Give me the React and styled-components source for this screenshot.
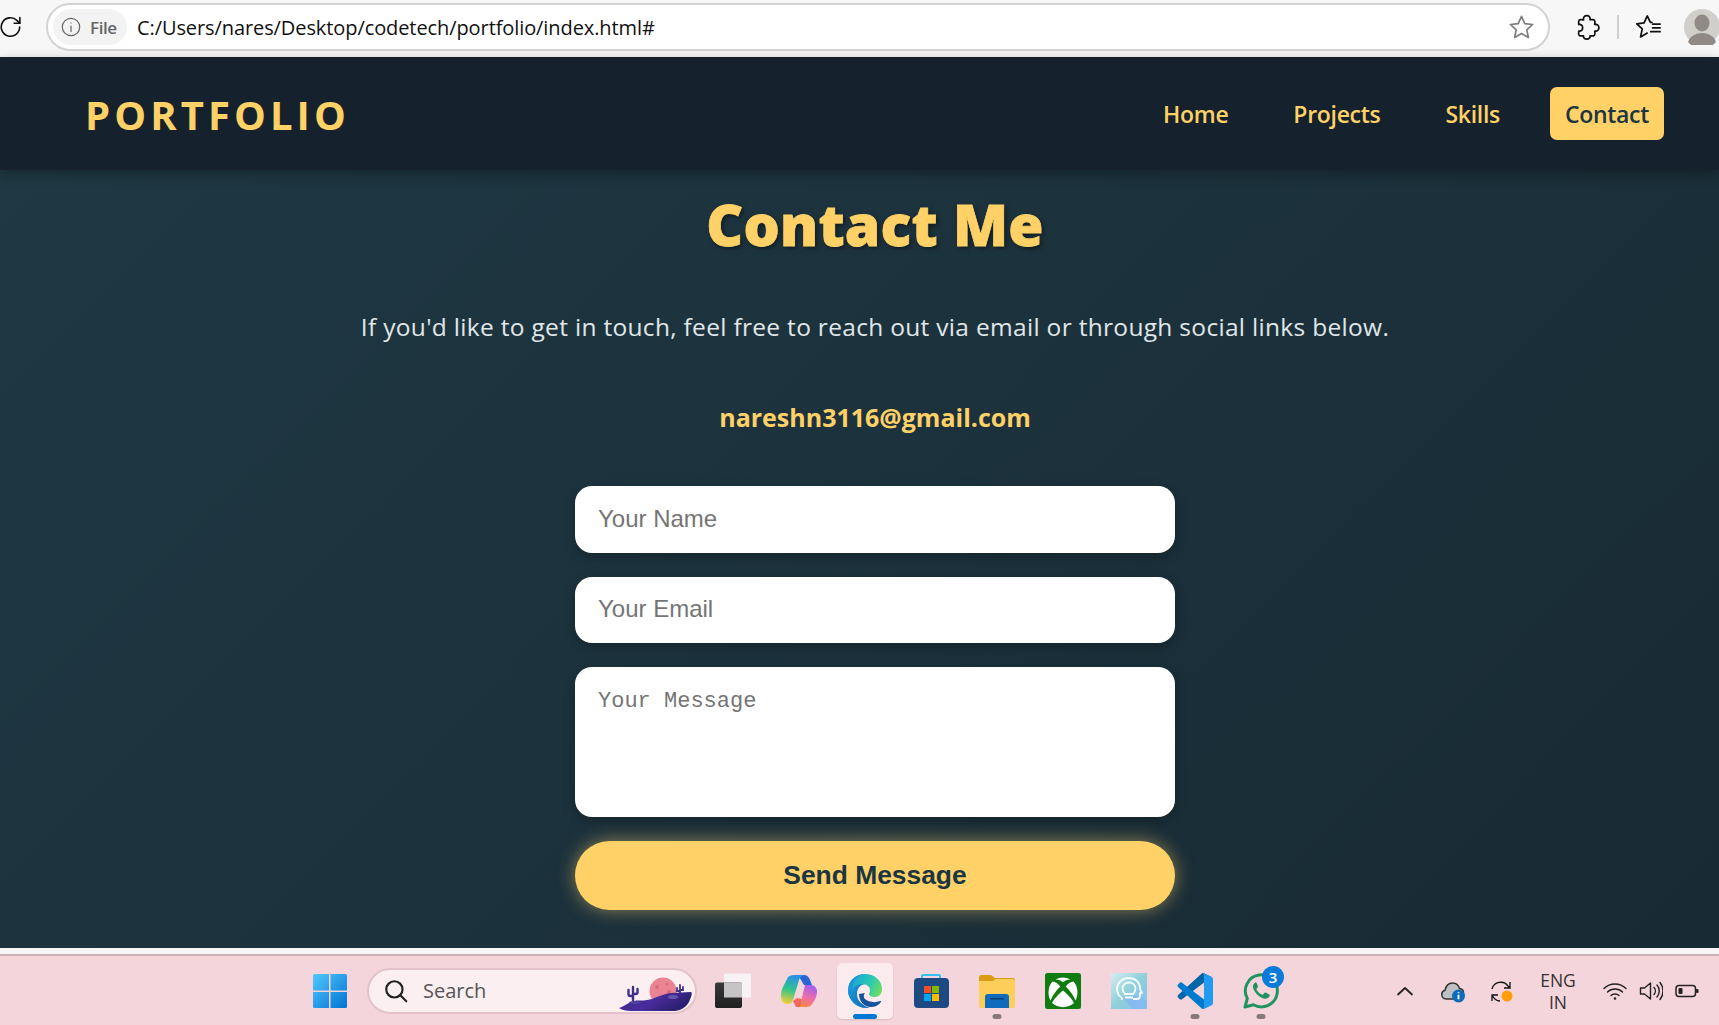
import React from 'react';
import styled, { createGlobalStyle } from 'styled-components';

const GOLD = '#ffd166';
const INK = '#1b3541';
const SEGOE = '"Open Sans", "Noto Sans", sans-serif';

const Global = createGlobalStyle`
  html, body { margin: 0; height: 100%; overflow: hidden; }
  #root { height: 100%; }
  * { box-sizing: border-box; }
`;

const Page = styled.div`
  height: 1025px;
  display: flex;
  flex-direction: column;
  font-family: ${SEGOE};
  background: #fff;
`;

/* browser chrome */
const Chrome = styled.div`
  height: 57px;
  flex: none;
  background: #f7f7f7;
  display: flex;
  align-items: center;
  padding: 0 1px 3px 0;
`;
const Reload = styled.svg`
  width: 26px;
  height: 26px;
  margin-left: -2px;
  margin-right: 22px;
  flex: none;
`;
const AddressBar = styled.div`
  width: 1504px;
  height: 48px;
  flex: none;
  background: #fff;
  border: 2px solid #d3d3d3;
  border-radius: 24px;
  display: flex;
  align-items: center;
  padding: 0 12px 0 5px;
`;
const FileChip = styled.div`
  width: 74px;
  height: 36px;
  border-radius: 18px;
  background: #f3f3f3;
  color: #666;
  display: flex;
  align-items: center;
  gap: 8px;
  padding-left: 7px;
  font-size: 17px;
  font-weight: 600;
  letter-spacing: -0.4px;
`;
const Url = styled.div`
  margin-left: 10px;
  flex: 1;
  color: #111;
  font-size: 20px;
  letter-spacing: -0.09px;
  white-space: nowrap;
`;
const ChromeTools = styled.div`
  display: flex;
  align-items: center;
  margin-left: 24px;
`;
const ToolDivider = styled.span`
  width: 2px;
  height: 24px;
  background: #cfcfcf;
  margin: 0 16px 0 17px;
`;
const Avatar = styled.svg`
  width: 36px;
  height: 36px;
  margin-left: 21px;
  flex: none;
`;

/* site */
const NavBar = styled.nav`
  height: 113px;
  flex: none;
  background: #15222d;
  box-shadow: 0 4px 12px rgba(0, 0, 0, 0.3);
  position: relative;
  z-index: 1;
  display: flex;
  align-items: center;
  justify-content: space-between;
  padding: 0 55px 0 85px;
`;
const Logo = styled.div`
  color: ${GOLD};
  font-size: 40px;
  line-height: 56px;
  padding-top: 2px;
  font-weight: 700;
  letter-spacing: 4.1px;
`;
const NavLinks = styled.div`
  display: flex;
  align-items: center;
  gap: 35px;
`;
const NavLink = styled.a`
  height: 53px;
  display: flex;
  align-items: center;
  padding: 0 15px;
  border-radius: 7px;
  font-size: 23px;
  font-weight: 600;
  letter-spacing: -0.3px;
  color: ${(p) => (p.$active ? INK : GOLD)};
  background: ${(p) => (p.$active ? GOLD : 'transparent')};
`;
const Main = styled.main`
  flex: 1;
  background: linear-gradient(135deg, #1f3843 0%, #1b303b 60%, #182a33 100%);
  display: flex;
  flex-direction: column;
  align-items: center;
  padding: 19px 0 0 31px;
`;
const Heading = styled.h1`
  margin: 0;
  color: ${GOLD};
  font-size: 57px;
  line-height: 70px;
  font-weight: 800;
  letter-spacing: 0.2px;
  -webkit-text-stroke: 0.8px ${GOLD};
  text-shadow: 2px 2px 5px rgba(0, 0, 0, 0.5);
`;
const Lead = styled.p`
  margin: 51px 0 0;
  color: #e0e7e9;
  font-size: 24.5px;
  line-height: 34px;
  letter-spacing: 0.31px;
`;
const Email = styled.div`
  margin-top: 55px;
  color: ${GOLD};
  font-size: 25px;
  line-height: 36px;
  font-weight: 700;
`;
const Form = styled.form`
  width: 600px;
  margin-top: 51px;
  display: flex;
  flex-direction: column;
  gap: 24px;
`;
const Field = styled.input`
  height: 66.5px;
  border: 0;
  border-radius: 17px;
  background: #fff;
  padding: 0 23px 1px;
  font-family: "Liberation Sans", Arial, sans-serif;
  font-size: 24px;
  box-shadow: 0 4px 12px rgba(0, 0, 0, 0.25);
  &::placeholder { color: #757575; opacity: 1; }
`;
const MessageBox = styled.textarea`
  height: 150px;
  border: 0;
  border-radius: 17px;
  background: #fff;
  padding: 22px 23px;
  resize: none;
  display: block;
  font-family: "Liberation Mono", monospace;
  font-size: 22px;
  line-height: 26px;
  box-shadow: 0 4px 12px rgba(0, 0, 0, 0.25);
  &::placeholder { color: #757575; opacity: 1; }
`;
const SendButton = styled.button`
  height: 69px;
  border: 0;
  border-radius: 35px;
  background: ${GOLD};
  color: ${INK};
  font-family: "Liberation Sans", Arial, sans-serif;
  font-size: 26.4px;
  font-weight: 700;
  box-shadow: 0 0 18px rgba(255, 209, 102, 0.5);
`;
const WhiteStrip = styled.div`
  height: 8px;
  flex: none;
  background: #f6f6f6;
  border-bottom: 2px solid #c9b0b5;
`;

/* taskbar */
const Taskbar = styled.footer`
  height: 69px;
  flex: none;
  background: #f4d5dc;
  display: flex;
  align-items: center;
  padding: 0 20px 0 312px;
  color: #222;
`;
const SearchBox = styled.div`
  width: 330px;
  height: 46px;
  margin-left: 19px;
  margin-right: 3px;
  border-radius: 23px;
  background: #fbeff1;
  border: 2px solid #e3c3c9;
  display: flex;
  align-items: center;
  padding: 0 2px 0 14px;
  color: #555;
  font-size: 20px;
  gap: 14px;
`;
const SearchArt = styled.svg`
  margin-left: auto;
  width: 74px;
  height: 36px;
  flex: none;
  align-self: flex-end;
`;
const TaskItem = styled.div`
  width: 66px;
  height: 56px;
  flex: none;
  display: flex;
  align-items: center;
  justify-content: center;
  position: relative;
  &::before {
    content: '';
    display: ${(p) => (p.$active ? 'block' : 'none')};
    position: absolute;
    left: 5px;
    right: 5px;
    top: 0;
    bottom: 0;
    background: #fbebee;
    border-radius: 5px;
    box-shadow: 0 1px 2px rgba(0, 0, 0, 0.12);
  }
  &::after {
    content: '';
    display: ${(p) => (p.$mark ? 'block' : 'none')};
    position: absolute;
    bottom: 0;
    left: 50%;
    transform: translateX(-50%);
    width: ${(p) => (p.$mark === 'active' ? 24 : 9)}px;
    height: 5px;
    border-radius: 3px;
    background: ${(p) => (p.$mark === 'active' ? '#0078d4' : '#857a7d')};
  }
  svg { position: relative; z-index: 1; }
`;
const Badge = styled.span`
  position: absolute;
  z-index: 2;
  top: 3px;
  right: 10px;
  width: 22px;
  height: 22px;
  border-radius: 50%;
  background: #0a7bd8;
  color: #fff;
  font-size: 15px;
  font-weight: 600;
  display: flex;
  align-items: center;
  justify-content: center;
`;
const Tray = styled.div`
  margin-left: auto;
  display: flex;
  align-items: center;
`;
const TrayIcon = styled.svg`
  width: 24px;
  height: 24px;
  flex: none;
  margin-left: ${(p) => p.$gap || 0}px;
`;
const Locale = styled.div`
  width: 50px;
  margin: 0 20px 0 20px;
  text-align: center;
  font-size: 17.5px;
  line-height: 22px;
  color: #333;
`;

const Outline = ({ size = 28, color = '#111', width = 1.6, children }) => (
  <svg width={size} height={size} viewBox="0 0 24 24" fill="none" stroke={color} strokeWidth={width} strokeLinejoin="round" strokeLinecap="round">
    {children}
  </svg>
);

const WindowsLogo = () => (
  <svg width="36" height="36" viewBox="0 0 36 36">
    <defs>
      <linearGradient id="win" x1="0" y1="0" x2="1" y2="1">
        <stop offset="0" stopColor="#52c8ff" />
        <stop offset="1" stopColor="#0073d1" />
      </linearGradient>
    </defs>
    <path fill="url(#win)" d="M1 2.500A1.500 1.500 0 0 1 2.500 1H17v16.500H1zM18.500 1H33.500A1.500 1.500 0 0 1 35 2.500V17.500H18.500zM1 19H17V35H2.500A1.500 1.500 0 0 1 1 33.500zM18.500 19H35V33.500A1.500 1.500 0 0 1 33.500 35H18.500z" />
  </svg>
);

const TaskView = () => (
  <svg width="36" height="36" viewBox="0 0 36 36">
    <defs>
      <linearGradient id="tvFront" x1="0" y1="0" x2="0" y2="1">
        <stop offset="0" stopColor="#3a3a3a" />
        <stop offset="1" stopColor="#1f1f1f" />
      </linearGradient>
    </defs>
    <rect x="9" y="0.500" width="27" height="24" rx="1.500" fill="#f7f3f4" />
    <rect x="0" y="9.500" width="27" height="25.500" rx="2" fill="url(#tvFront)" />
    <rect x="9" y="9.500" width="18" height="15" fill="#c6c4c4" />
  </svg>
);

const CopilotIcon = () => (
  <svg width="36" height="34" viewBox="0 0 36 34">
    <defs>
      <linearGradient id="cpA" x1="0.500" y1="0" x2="0.300" y2="1">
        <stop offset="0" stopColor="#2a8fe8" />
        <stop offset="0.500" stopColor="#2fc48c" />
        <stop offset="1" stopColor="#f4cf36" />
      </linearGradient>
      <linearGradient id="cpB" x1="0.700" y1="0" x2="0.300" y2="1">
        <stop offset="0" stopColor="#a25cf0" />
        <stop offset="0.550" stopColor="#f06ea6" />
        <stop offset="1" stopColor="#f78a3c" />
      </linearGradient>
    </defs>
    <path fill="#2565d4" d="M17 1h6c3 0 5 2 6 5l2 5h-8z" />
    <path fill="url(#cpA)" d="M13 1h11c-3 0-5 2-6 5l-6 20c-1 3-3 4-5 4H6c-4 0-6-4-6-9 0-3 1-7 3-10l3-6c1-3 4-4 7-4z" />
    <path fill="url(#cpB)" d="M24 11h6c3 0 6 3 6 6 0 4-1 7-3 10l-2 3c-1 2-3 3-6 3H14c3 0 5-2 6-5z" />
    <path fill="#ef4f3f" d="M12 27c1 2 2 4 3 6h2c2 0 3-2 3-5l1-3-5-1z" opacity="0.800" />
  </svg>
);

const EdgeIcon = () => (
  <svg width="36" height="36" viewBox="0 0 36 36">
    <defs>
      <linearGradient id="edA" x1="0" y1="0" x2="1" y2="1">
        <stop offset="0" stopColor="#1f9fe0" />
        <stop offset="1" stopColor="#0f6db6" />
      </linearGradient>
      <linearGradient id="edB" x1="0" y1="0.300" x2="1" y2="0.700">
        <stop offset="0" stopColor="#19a9d8" />
        <stop offset="0.550" stopColor="#2bc9b0" />
        <stop offset="1" stopColor="#6ede5f" />
      </linearGradient>
    </defs>
    <path fill="#15539e" d="M12 21c0 7 5 13 12 13 4 0 8-2 10-5 .4-.7-.2-1.200-1-.9-5 2-12 1-15-2-2-2-1-5 0-6z" />
    <path fill="url(#edA)" d="M1 17C1 8 8 1 18 1c-8 2-12 8-12 13 0 6 4 14 12 19 1 .6 3 1.500 5 1.700C11 37 1 28 1 17z" />
    <path fill="url(#edA)" d="M1 18c1-6 6-10 12-10 2 0 5 1 6 3-5 0-9 4-9 10 0 5 3 10 8 12-9-1-17-7-17-15z" />
    <path fill="url(#edB)" d="M18 1c9 0 17 6 17 15 0 5-3 8-7 8-3 0-6-1-6-3 0-1 1-2 1-4 0-3-3-6-8-6-5 0-9 3-10 7C5 10 10 1 18 1z" />
  </svg>
);

const StoreIcon = () => (
  <svg width="36" height="36" viewBox="0 0 36 36">
    <path fill="none" stroke="#35c3f2" strokeWidth="2" d="M9 7V3a1 1 0 0 1 1-1h16a1 1 0 0 1 1 1v4" />
    <rect x="1" y="5" width="35" height="30" rx="4" fill="#1d4a82" />
    <rect x="11" y="13" width="7" height="7" fill="#f25022" />
    <rect x="19" y="13" width="7" height="7" fill="#7fba00" />
    <rect x="11" y="21" width="7" height="7" fill="#00a4ef" />
    <rect x="19" y="21" width="7" height="7" fill="#ffb900" />
  </svg>
);

const FolderIcon = () => (
  <svg width="36" height="34" viewBox="0 0 36 34">
    <path fill="#d99c12" d="M0 3a2 2 0 0 1 2-2h10l4 3h18a2 2 0 0 1 2 2v6H0z" />
    <path fill="#fdcf5a" d="M0 7h14l3-2h17a2 2 0 0 1 2 2v25a2 2 0 0 1-2 2H2a2 2 0 0 1-2-2z" />
    <path fill="#0f6cbd" d="M6 34V23a3 3 0 0 1 3-3h18a3 3 0 0 1 3 3v11z" />
    <rect x="11" y="24" width="14" height="1.500" fill="#0a3f73" />
  </svg>
);

const XboxIcon = () => (
  <svg width="36" height="36" viewBox="0 0 36 36">
    <rect width="36" height="36" rx="2.500" fill="#107c10" />
    <path fill="#fff" d="M10.500 6.500C15 3.700 21 3.700 25.500 6.500 22.500 6.300 20 7.500 18 9.200 16 7.500 13.500 6.300 10.500 6.500z" />
    <path fill="#fff" d="M18 17.500C22 20.500 27 26 29 30c-6 5.500-16 5.500-22 0 2-4 7-9.500 11-12.500z" />
    <path fill="#fff" d="M7.500 8.500C10.500 8.800 13 10.800 15.200 13.500 11 17.500 7.500 22.500 5.500 27.500 2.300 22 3 13 7.500 8.500z" />
    <path fill="#fff" d="M28.500 8.500C25.500 8.800 23 10.800 20.800 13.500 25 17.500 28.500 22.500 30.500 27.500 33.700 22 33 13 28.500 8.500z" />
  </svg>
);

const HeadAppIcon = () => (
  <svg width="36" height="36" viewBox="0 0 36 36">
    <defs>
      <linearGradient id="hd" x1="0" y1="0" x2="1" y2="1">
        <stop offset="0" stopColor="#d5edf0" />
        <stop offset="0.500" stopColor="#8fd0d8" />
        <stop offset="1" stopColor="#87c0f6" />
      </linearGradient>
    </defs>
    <rect width="36" height="36" fill="url(#hd)" />
    <path d="M12 25l17-3 7 7v7H22z" fill="#86bbf0" />
    <path fill="none" stroke="#f3fbfc" strokeWidth="1.800" strokeLinejoin="round" d="M11 27v-2c-3-2-5-5-5-9C6 10 11 5 18 5c6 0 11 4 11 10 0 1 .3 2 1 3l1 2h-2v3c0 2-1 3-3 3h-4" />
    <path fill="none" stroke="#f3fbfc" strokeWidth="1.800" strokeLinejoin="round" d="M14 21c-1.500-1.500-2.500-3.500-2.500-5.500 0-3.500 3-6 6.500-6s6.500 2.500 6.500 6c0 2-1 4-2.500 5.500zM14 24.500h8" />
  </svg>
);

const VsCodeIcon = () => (
  <svg width="36" height="36" viewBox="0 0 100 100">
    <path fill="#0065a9" d="M96 11 75 1a6 6 0 0 0-7 1L3 61c-2 2-2 5 0 7l5 5c2 1.500 4 1.500 6 0l83-63z" />
    <path fill="#007acc" d="M96 89 75 99a6 6 0 0 1-7-1L3 39c-2-2-2-5 0-7l5-5c2-1.500 4-1.500 6 0l83 63z" />
    <path fill="#1f9cf0" d="M75 99a6 6 0 0 1-7-1c2.500 2.500 7 1 7-3V5c0-4-4.500-5.500-7-3a6 6 0 0 1 7-1l21 10c2 1 4 3 4 6v66c0 3-2 5-4 6z" />
  </svg>
);

const WhatsappIcon = () => (
  <svg width="36" height="36" viewBox="0 0 36 36">
    <path fill="none" stroke="#1f9461" strokeWidth="3" strokeLinejoin="round" d="M2 34l2.300-8.500A16 16 0 1 1 10.500 31.800z" />
    <path fill="#1f9461" d="M12.500 9.500c-1.500.8-3 2.500-2.500 5 .8 4 5.500 9.500 10.500 11 3 .9 5-.5 6-2.200.4-.8.300-1.500-.3-1.900l-3.500-1.800c-.6-.3-1.100-.1-1.500.4l-1.100 1.400c-.4.4-.8.500-1.300.2-2.300-1-4-2.800-5.200-4.800-.3-.5-.1-1 .2-1.300l.9-1.100c.3-.4.4-.8.200-1.300l-1.400-3.300c-.3-.7-1.200-1-1.500-.7z" />
  </svg>
);

const StarGlyph = () => (
  <Outline size={29} color="#7d7d7d" width={1.4}>
    <path d="M12 2.800l2.700 6 6.500.7-4.800 4.400 1.300 6.400L12 17l-5.700 3.300 1.300-6.400L2.800 9.500l6.500-.7z" />
  </Outline>
);

const App = () => (
  <Page>
    <Global />
    <Chrome>
      <Reload viewBox="0 0 24 24" fill="none" stroke="#111" strokeWidth="1.500" strokeLinecap="round">
        <path d="M20 12a8.500 8.500 0 1 1-2.600-6.100L20 8.400" />
        <path d="M20.200 3.200v5.300h-5.300" />
      </Reload>
      <AddressBar>
        <FileChip>
          <Outline size={22} color="#666" width={1.3}>
            <circle cx="12" cy="12" r="9.500" />
            <path d="M12 11v6M12 7.500v.2" />
          </Outline>
          File
        </FileChip>
        <Url>C:/Users/nares/Desktop/codetech/portfolio/index.html#</Url>
        <StarGlyph />
      </AddressBar>
      <ChromeTools>
        <Outline size={26} width={1.6}>
          <path d="M8.800 5.300C8.300 3 9.800 1.500 11.800 1.500s3.500 1.500 3 3.800c2-.3 3.400-.2 4 .4.600.6.700 2 .4 4 2.300-.5 3.800 1 3.800 3s-1.500 3.500-3.800 3c.3 2 .2 3.400-.4 4-.6.600-2 .7-4 .4.500 1.700-1 3-3 3s-3.500-1.300-3-3c-2 .3-3.400.2-4-.4-.6-.6-.7-2-.4-4 1.700.4 3.600-.6 3.600-3s-1.900-3.400-3.600-3c-.3-2-.2-3.400.4-4 .6-.6 2-.7 4-.2z" />
        </Outline>
        <ToolDivider />
        <Outline size={28} width={1.5}>
          <path d="M14.500 8h-1.300L10.500 2.500 7.800 8.500 1.500 9.300l4.700 4.300-1.400 6.900 5.700-3.300" />
          <path d="M15 9.500h6.500M15 12.700h6.500M13.500 16h8" />
        </Outline>
        <Avatar viewBox="0 0 36 36">
          <circle cx="18" cy="18" r="18" fill="#d0cfcb" />
          <ellipse cx="18" cy="14" rx="7.500" ry="8.500" fill="#8f8a85" />
          <path d="M4 33c2-6 8-9 14-9s12 3 14 9a18 18 0 0 1-28 0z" fill="#8f8a85" />
        </Avatar>
      </ChromeTools>
    </Chrome>

    <NavBar>
      <Logo>PORTFOLIO</Logo>
      <NavLinks>
        <NavLink>Home</NavLink>
        <NavLink>Projects</NavLink>
        <NavLink>Skills</NavLink>
        <NavLink $active>Contact</NavLink>
      </NavLinks>
    </NavBar>

    <Main>
      <Heading>Contact Me</Heading>
      <Lead>If you'd like to get in touch, feel free to reach out via email or through social links below.</Lead>
      <Email>nareshn3116@gmail.com</Email>
      <Form>
        <Field type="text" placeholder="Your Name" />
        <Field type="email" placeholder="Your Email" />
        <MessageBox placeholder="Your Message" />
        <SendButton type="button">Send Message</SendButton>
      </Form>
    </Main>
    <WhiteStrip />

    <Taskbar>
      <WindowsLogo />
      <SearchBox>
        <Outline size={26} color="#222" width={2}>
          <circle cx="10.500" cy="10.500" r="7.500" />
          <path d="M16 16l5.500 5.500" />
        </Outline>
        Search
        <SearchArt viewBox="0 0 74 36">
          <defs>
            <linearGradient id="dune" x1="0" y1="0" x2="1" y2="0.400">
              <stop offset="0" stopColor="#2f2a86" />
              <stop offset="0.550" stopColor="#4a2c9c" />
              <stop offset="1" stopColor="#2a1f70" />
            </linearGradient>
          </defs>
          <circle cx="44" cy="15" r="13.500" fill="#ea8493" />
          <circle cx="38" cy="11" r="2" fill="#d86a7c" />
          <circle cx="48" cy="8" r="1.500" fill="#d86a7c" />
          <circle cx="50" cy="16" r="2" fill="#d86a7c" />
          <path d="M14 24V11M9.500 14v4c0 1 1 2 2 2H14M18.500 13v3c0 1-1 2-2 2H14" fill="none" stroke="#3d2f8f" strokeWidth="2.400" strokeLinecap="round" />
          <path d="M61 18V9M58 12v3h3M64 11v3h-3" fill="none" stroke="#3d2f8f" strokeWidth="1.800" strokeLinecap="round" />
          <path d="M0 32c6-2 10-6 14-7 5-1 10 0 14-1 8-1 14-6 24-7l20-1c2 1 0 5-2 10-3 5-7 8-14 9H12C7 35 3 34 0 32z" fill="url(#dune)" />
          <ellipse cx="54" cy="21" rx="5" ry="2" fill="#6157ad" />
          <ellipse cx="16" cy="26.500" rx="6" ry="1.500" fill="#4e45a0" />
        </SearchArt>
      </SearchBox>
      <TaskItem><TaskView /></TaskItem>
      <TaskItem><CopilotIcon /></TaskItem>
      <TaskItem $active $mark="active"><EdgeIcon /></TaskItem>
      <TaskItem><StoreIcon /></TaskItem>
      <TaskItem $mark="open"><FolderIcon /></TaskItem>
      <TaskItem><XboxIcon /></TaskItem>
      <TaskItem><HeadAppIcon /></TaskItem>
      <TaskItem $mark="open"><VsCodeIcon /></TaskItem>
      <TaskItem $mark="open">
        <WhatsappIcon />
        <Badge>3</Badge>
      </TaskItem>

      <Tray>
        <TrayIcon viewBox="0 0 24 24" fill="none" stroke="#222" strokeWidth="1.800" strokeLinecap="round" strokeLinejoin="round">
          <path d="M5 15.500l7-6.500 7 6.500" />
        </TrayIcon>
        <TrayIcon viewBox="0 0 24 24" $gap={24}>
          <path d="M5 20a4.500 4.500 0 0 1-1-8.800C5 6.500 8 4 11.500 4s6 2 7 5.500c2 .3 4 1.500 4 4 0 3-2 6.500-5 6.500z" fill="#bfc0c2" stroke="#333" strokeWidth="1.500" />
          <circle cx="17.500" cy="17" r="6.500" fill="#0f6cbd" />
          <path d="M17.500 15.800v4.500M17.500 13.300v.9" stroke="#fff" strokeWidth="1.800" />
        </TrayIcon>
        <TrayIcon viewBox="0 0 24 24" $gap={24} fill="none" stroke="#111" strokeWidth="1.300">
          <path d="M3 10a9 9 0 0 1 16-3l2 1.800V3M21 9h-6" />
          <path d="M3 22v-6h6M3 16c2 4 5 6 8 6" />
          <circle cx="18" cy="17" r="5.500" fill="#ff9d0a" stroke="none" />
        </TrayIcon>
        <Locale>ENG<br />IN</Locale>
        <TrayIcon viewBox="0 0 24 24" fill="none" stroke="#222" strokeWidth="1.400" strokeLinecap="round">
          <path d="M1 9.500c6-6 16-6 22 0M4.500 13c4-4 11-4 15 0M8 16.500c2-2 6-2 8 0" />
          <circle cx="12" cy="19.500" r="1.300" fill="#222" stroke="none" />
        </TrayIcon>
        <TrayIcon viewBox="0 0 24 24" $gap={12} fill="none" stroke="#222" strokeWidth="1.400" strokeLinejoin="round" strokeLinecap="round">
          <path d="M1.500 9v6h4l6 5V4l-6 5z" />
          <path d="M15 8.500c1.800 2 1.800 5 0 7M18 6c3 3.500 3 8.500 0 12M21 3.500c4 5 4 12 0 17" />
        </TrayIcon>
        <TrayIcon viewBox="0 0 24 24" $gap={12}>
          <rect x="1" y="6.500" width="19.500" height="11" rx="3" fill="none" stroke="#222" strokeWidth="1.500" />
          <rect x="3.500" y="9" width="4" height="6" rx="1" fill="#222" />
          <rect x="21" y="10" width="2.500" height="4" rx="1" fill="#222" />
        </TrayIcon>
      </Tray>
    </Taskbar>
  </Page>
);

export default App;
